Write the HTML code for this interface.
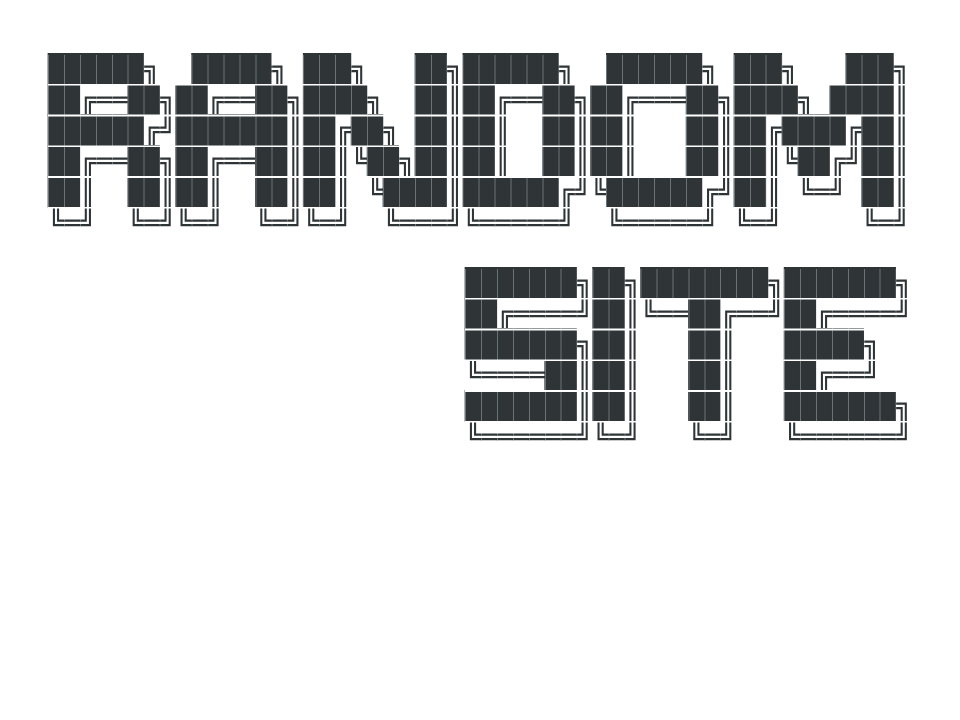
<!DOCTYPE html>
<html><head><meta charset="utf-8"><style>
html,body{margin:0;padding:0;background:#fff;width:960px;height:720px;overflow:hidden}
pre{position:absolute;margin:0;font-family:"DejaVu Sans Mono","Liberation Mono",monospace;font-size:26.5px;line-height:30.7px;color:#2f3537;white-space:pre}
#a{left:48px;top:55px}
#b{left:465px;top:269px}
.g{position:absolute;pointer-events:none;mix-blend-mode:lighten;
background-image:repeating-linear-gradient(to bottom,transparent 0,transparent 29px,#fff 29px,#fff 30.7px),
repeating-linear-gradient(to right,#6a7378 0,#6a7378 1px,transparent 1px,transparent 15.95px);}
#ga{left:48px;top:55px;width:862px;height:184px}
#gb{left:465px;top:269px;width:447px;height:184px}
</style></head><body>
<pre id="a">██████╗  █████╗ ███╗   ██╗██████╗  ██████╗ ███╗   ███╗
██╔══██╗██╔══██╗████╗  ██║██╔══██╗██╔═══██╗████╗ ████║
██████╔╝███████║██╔██╗ ██║██║  ██║██║   ██║██╔████╔██║
██╔══██╗██╔══██║██║╚██╗██║██║  ██║██║   ██║██║╚██╔╝██║
██║  ██║██║  ██║██║ ╚████║██████╔╝╚██████╔╝██║ ╚═╝ ██║
╚═╝  ╚═╝╚═╝  ╚═╝╚═╝  ╚═══╝╚═════╝  ╚═════╝ ╚═╝     ╚═╝</pre>
<pre id="b">███████╗██╗████████╗███████╗
██╔════╝██║╚══██╔══╝██╔════╝
███████╗██║   ██║   █████╗  
╚════██║██║   ██║   ██╔══╝  
███████║██║   ██║   ███████╗
╚══════╝╚═╝   ╚═╝   ╚══════╝</pre>
<div class="g" id="ga"></div>
<div class="g" id="gb"></div>
</body></html>
